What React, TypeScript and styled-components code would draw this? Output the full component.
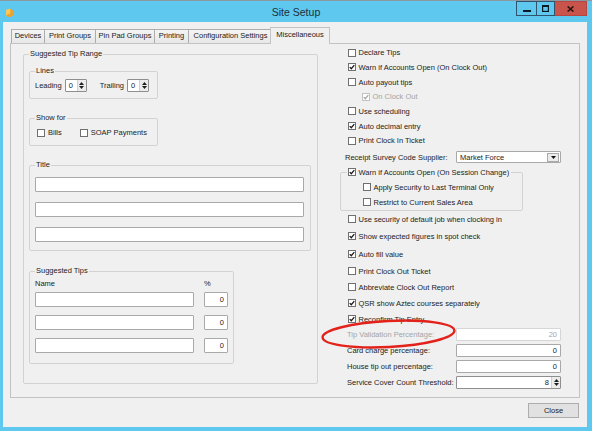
import React from 'react';
import styled, { createGlobalStyle } from 'styled-components';

const GlobalStyle = createGlobalStyle`
  html, body {
    margin: 0;
    padding: 0;
  }
  body {
    width: 592px;
    height: 431px;
    overflow: hidden;
    background: #5ec8ef;
    font-family: "Liberation Sans", Arial, sans-serif;
    color: #1c1c1c;
  }
`;

const Window = styled.div`
  position: relative;
  width: 592px;
  height: 431px;
  box-sizing: border-box;
  background: #5ec8ef;
  border-top: 1px solid #8b98a1;
  display: flex;
  flex-direction: column;
`;

const TitleBar = styled.div`
  display: grid;
  grid-template-columns: 1fr auto 1fr;
  height: 21px;
  flex-shrink: 0;
`;

const AppIcon = styled.div`
  display: flex;
  align-items: flex-start;
  padding: 7px 0 0 5px;
  & svg {
    display: block;
  }
`;

const Title = styled.div`
  margin-top: 1px;
  font-size: 10.5px;
  line-height: 21px;
  color: #1d2f3b;
`;

const Controls = styled.div`
  justify-self: end;
  display: flex;
  margin-right: 5px;
  height: 15px;
`;

const CaptionButton = styled.div<{ $w: number; $close?: boolean }>`
  width: ${p => p.$w}px;
  height: 15px;
  box-sizing: border-box;
  display: flex;
  align-items: center;
  justify-content: center;
  background: ${p => (p.$close ? '#c9544c' : '#5ec8ef')};
  border: 1px solid ${p => (p.$close ? '#b6463f' : '#2f536f')};
  & + & {
    border-left: none;
  }
`;

const Client = styled.div`
  flex: 1;
  margin: 0 5px 4px 3px;
  background: #f0f0f0;
  padding-top: 5px;
  display: flex;
  flex-direction: column;
`;

const TabStrip = styled.div`
  display: flex;
  align-items: flex-end;
  height: 16px;
  padding-left: 8px;
  position: relative;
  z-index: 1;
`;

const Tab = styled.div<{ $w: number; $active?: boolean }>`
  width: ${p => p.$w}px;
  height: ${p => (p.$active ? 17 : 14)}px;
  box-sizing: border-box;
  margin-right: -1px;
  margin-left: ${p => (p.$active ? -2 : 0)}px;
  margin-bottom: ${p => (p.$active ? -1 : 0)}px;
  border: 1px solid ${p => (p.$active ? '#c3c3c3' : '#acacac')};
  border-bottom: none;
  background: ${p => (p.$active ? '#f0f0f0' : 'linear-gradient(#f4f4f4, #e7e7e7)')};
  font-size: 7.5px;
  line-height: ${p => (p.$active ? 14 : 12)}px;
  text-align: center;
  white-space: nowrap;
  position: relative;
  z-index: ${p => (p.$active ? 2 : 1)};
`;

const Panel = styled.div`
  margin-left: 7px;
  width: 570px;
  height: 355px;
  box-sizing: border-box;
  border: 1px solid #c3c3c3;
  background: #f0f0f0;
  padding-left: 12px;
  display: grid;
  grid-template-columns: 295px 225px;
  column-gap: 22px;
  align-items: start;
`;

const Footer = styled.div`
  display: flex;
  justify-content: flex-end;
  padding: 5px 8px 0 0;
`;

const Button = styled.div`
  width: 51px;
  height: 15px;
  box-sizing: border-box;
  border: 1px solid #adadad;
  background: #e1e1e1;
  font-size: 7.5px;
  line-height: 13px;
  text-align: center;
`;

const Group = styled.fieldset<{ $w: number; $pad: string }>`
  margin: 0;
  width: ${p => p.$w}px;
  box-sizing: border-box;
  border: 1px solid #d2d2d2;
  border-radius: 2px;
  padding: ${p => p.$pad};
  min-inline-size: 0;
`;

const Legend = styled.legend`
  padding: 0 1px;
  font-size: 7.5px;
  line-height: 10px;
  white-space: nowrap;
`;

const CheckLegend = styled.legend`
  padding: 0 2px 0 1px;
  height: 12px;
  display: flex;
  align-items: center;
  gap: 2.5px;
`;

const Stack = styled.div<{ $gap: number }>`
  display: flex;
  flex-direction: column;
  gap: ${p => p.$gap}px;
`;

const Line = styled.div<{ $h: number; $pl?: number }>`
  display: flex;
  align-items: center;
  height: ${p => p.$h}px;
  padding-left: ${p => p.$pl ?? 0}px;
`;

const Text = styled.span<{ $muted?: boolean; $mr?: number; $w?: number }>`
  font-size: 7.5px;
  white-space: nowrap;
  color: ${p => (p.$muted ? '#a4a4a4' : '#1c1c1c')};
  margin-right: ${p => p.$mr ?? 0}px;
  ${p => (p.$w ? `width: ${p.$w}px; flex-shrink: 0;` : '')}
`;

const Field = styled.div<{ $w: number; $h: number; $right?: boolean; $muted?: boolean }>`
  width: ${p => p.$w}px;
  height: ${p => p.$h}px;
  box-sizing: border-box;
  flex-shrink: 0;
  display: flex;
  align-items: center;
  justify-content: ${p => (p.$right ? 'flex-end' : 'flex-start')};
  padding: 0 ${p => (p.$right ? 3 : 0)}px 0 3px;
  border: 1px solid ${p => (p.$muted ? '#d6d6d6' : '#a9a9a9')};
  border-radius: 1px;
  background: #fff;
  font-size: 7.5px;
  color: ${p => (p.$muted ? '#a4a4a4' : '#1c1c1c')};
`;

const SpinField = styled(Field)`
  padding-right: 0;
  border-color: #8f8f8f;
`;

const SpinArrows = styled.div<{ $tight?: boolean }>`
  margin-left: ${p => (p.$tight ? '0' : 'auto')};
  width: 8px;
  height: 100%;
  display: flex;
  flex-direction: column;
  align-items: center;
  justify-content: center;
  gap: 1px;
  background: #ececec;
  border-left: 1px solid #cfcfcf;
`;

const SpinValue = styled.span`
  margin-right: 2px;
`;

const DropButton = styled.div`
  margin-left: auto;
  width: 12px;
  height: 9px;
  margin-right: 1px;
  box-sizing: border-box;
  border: 1px solid #a9a9a9;
  background: #ececec;
  display: flex;
  align-items: center;
  justify-content: center;
`;

const BoxMark = styled.span<{ $disabled?: boolean }>`
  width: 8px;
  height: 8px;
  box-sizing: border-box;
  flex-shrink: 0;
  display: inline-flex;
  align-items: center;
  justify-content: center;
  border: 1px solid ${p => (p.$disabled ? '#c2c2c2' : '#707070')};
  background: #fff;
`;

const CheckRow = styled.div<{ $h: number; $pl: number }>`
  display: flex;
  align-items: center;
  gap: 2.5px;
  height: ${p => p.$h}px;
  padding-left: ${p => p.$pl}px;
`;

const LeftCol = styled.div`
  margin-top: 5px;
`;

const RightCol = styled.div`
  padding-top: 1.5px;
  display: flex;
  flex-direction: column;
`;

const TipHeader = styled.div`
  display: flex;
  gap: 10px;
  height: 12px;
  align-items: center;
  margin-bottom: 3px;
`;

const TipRow = styled.div`
  display: flex;
  gap: 10px;
`;

const Annotation = styled.svg`
  position: absolute;
  left: 318px;
  top: 316px;
  overflow: visible;
  pointer-events: none;
`;

const Arrow = ({ up }: { up?: boolean }) => (
  <svg width="5" height="3" viewBox="0 0 5 3">
    <path d={up ? 'M0 3 L2.5 0 L5 3 Z' : 'M0 0 L5 0 L2.5 3 Z'} fill="#1f1f1f" />
  </svg>
);

const CheckBox = ({ checked, disabled }: { checked?: boolean; disabled?: boolean }) => (
  <BoxMark $disabled={disabled}>
    {checked && (
      <svg width="6" height="6" viewBox="0 0 6 6">
        <path d="M0.7 3.1 L2.3 4.7 L5.3 1.1" fill="none" stroke={disabled ? '#a8a8a8' : '#1a1a1a'} strokeWidth="1.3" />
      </svg>
    )}
  </BoxMark>
);

type CheckProps = { label: string; checked?: boolean; disabled?: boolean; h: number; pl?: number };

const Check = ({ label, checked, disabled, h, pl = 8 }: CheckProps) => (
  <CheckRow $h={h} $pl={pl}>
    <CheckBox checked={checked} disabled={disabled} />
    <Text $muted={disabled}>{label}</Text>
  </CheckRow>
);

const Spin = ({ w, value }: { w: number; value: string }) => (
  <SpinField $w={w} $h={13}>
    <SpinValue>{value}</SpinValue>
    <SpinArrows>
      <Arrow up />
      <Arrow />
    </SpinArrows>
  </SpinField>
);

const tabs = [
  { label: 'Devices', w: 34 },
  { label: 'Print Groups', w: 52 },
  { label: 'Pin Pad Groups', w: 60 },
  { label: 'Printing', w: 35 },
  { label: 'Configuration Settings', w: 85 },
];

const topChecks: { label: string; checked?: boolean; disabled?: boolean; pl?: number }[] = [
  { label: 'Declare Tips' },
  { label: 'Warn if Accounts Open (On Clock Out)', checked: true },
  { label: 'Auto payout tips' },
  { label: 'On Clock Out', checked: true, disabled: true, pl: 22 },
  { label: 'Use scheduling' },
  { label: 'Auto decimal entry', checked: true },
  { label: 'Print Clock In Ticket' },
];

const lowerChecks: { label: string; checked?: boolean; h: number }[] = [
  { label: 'Use security of default job when clocking in', h: 17 },
  { label: 'Show expected figures in spot check', checked: true, h: 17.5 },
  { label: 'Auto fill value', checked: true, h: 18 },
  { label: 'Print Clock Out Ticket', h: 16 },
  { label: 'Abbreviate Clock Out Report', h: 16 },
  { label: 'QSR show Aztec courses separately', checked: true, h: 16 },
  { label: 'Reconfirm Tip Entry', checked: true, h: 16 },
];

const fields: { label: string; value: string; muted?: boolean }[] = [
  { label: 'Tip Validation Percentage:', value: '20', muted: true },
  { label: 'Card charge percentage:', value: '0' },
  { label: 'House tip out percentage:', value: '0' },
];

export default function App() {
  return (
    <>
      <GlobalStyle />
      <Window>
        <TitleBar>
          <AppIcon>
            <svg width="9" height="10" viewBox="0 0 9 10">
              <path d="M1 2 L5 0.5 L8.5 3 L8 7.5 L4.5 9.5 L1 7.5 Z" fill="#f0a12a" />
              <path d="M1 2 L5 0.5 L5.5 5 L1 7.5 Z" fill="#f7c95a" />
            </svg>
          </AppIcon>
          <Title>Site Setup</Title>
          <Controls>
            <CaptionButton $w={21}>
              <svg width="8" height="8" viewBox="0 0 8 8">
                <rect x="0" y="5" width="8" height="2" fill="#0d1b26" />
              </svg>
            </CaptionButton>
            <CaptionButton $w={18}>
              <svg width="7" height="7" viewBox="0 0 7 7">
                <rect x="0.6" y="0.6" width="5.8" height="5.8" fill="none" stroke="#0d1b26" strokeWidth="1.2" />
                <rect x="0" y="0" width="7" height="2" fill="#0d1b26" />
              </svg>
            </CaptionButton>
            <CaptionButton $w={32} $close>
              <svg width="7" height="6" viewBox="0 0 7 6">
                <path d="M0.6 0.4 L6.4 5.6 M6.4 0.4 L0.6 5.6" stroke="#2a1412" strokeWidth="1.5" />
              </svg>
            </CaptionButton>
          </Controls>
        </TitleBar>

        <Client>
          <TabStrip>
            {tabs.map(t => (
              <Tab key={t.label} $w={t.w}>
                {t.label}
              </Tab>
            ))}
            <Tab $w={60} $active>
              Miscellaneous
            </Tab>
          </TabStrip>

          <Panel>
            <LeftCol>
              <Group $w={295} $pad="7px 6px 19px 5px">
                <Legend>Suggested Tip Range</Legend>
                <Stack $gap={14}>
                  <Group $w={129} $pad="2px 5px 5px 5px">
                    <Legend>Lines</Legend>
                    <Line $h={15}>
                      <Text $mr={3}>Leading</Text>
                      <Spin w={22} value="0" />
                      <Text style={{ marginLeft: 13 }} $mr={3}>
                        Trailing
                      </Text>
                      <Spin w={22} value="0" />
                    </Line>
                  </Group>

                  <Group $w={129} $pad="2px 5px 5px 5px">
                    <Legend>Show for</Legend>
                    <Line $h={15} $pl={2}>
                      <CheckBox />
                      <Text style={{ marginLeft: 3 }} $mr={18}>
                        Bills
                      </Text>
                      <CheckBox />
                      <Text style={{ marginLeft: 3 }}>SOAP Payments</Text>
                    </Line>
                  </Group>

                  <Group $w={282} $pad="7px 6px 8px 5px">
                    <Legend>Title</Legend>
                    <Stack $gap={10}>
                      <Field $w={269} $h={15} />
                      <Field $w={269} $h={15} />
                      <Field $w={269} $h={15} />
                    </Stack>
                  </Group>

                  <Group $w={205} $pad="1px 5px 10px 5px" style={{ marginTop: 1 }}>
                    <Legend>Suggested Tips</Legend>
                    <TipHeader>
                      <Text $w={159}>Name</Text>
                      <Text>%</Text>
                    </TipHeader>
                    <Stack $gap={8}>
                      {[0, 1, 2].map(i => (
                        <TipRow key={i}>
                          <Field $w={159} $h={15} />
                          <Field $w={24} $h={15} $right>
                            0
                          </Field>
                        </TipRow>
                      ))}
                    </Stack>
                  </Group>
                </Stack>
              </Group>
            </LeftCol>

            <RightCol>
              {topChecks.map(c => (
                <Check key={c.label} h={14.67} {...c} />
              ))}

              <Line $h={18} $pl={5}>
                <Text $w={111}>Receipt Survey Code Supplier:</Text>
                <Field $w={105} $h={12}>
                  Market Force
                  <DropButton>
                    <svg width="5" height="3" viewBox="0 0 5 3">
                      <path d="M0 0 L5 0 L2.5 3 Z" fill="#111" />
                    </svg>
                  </DropButton>
                </Field>
              </Line>

              <Group $w={183} $pad="1.5px 0 0 6px">
                <CheckLegend>
                  <CheckBox checked />
                  <Text>Warn if Accounts Open (On Session Change)</Text>
                </CheckLegend>
                <Check label="Apply Security to Last Terminal Only" h={15} pl={16} />
                <Check label="Restrict to Current Sales Area" h={15} pl={16} />
              </Group>

              {lowerChecks.map(c => (
                <Check key={c.label} label={c.label} checked={c.checked} h={c.h} />
              ))}

              {fields.map(f => (
                <Line key={f.label} $h={15.7} $pl={7}>
                  <Text $w={109} $muted={f.muted}>
                    {f.label}
                  </Text>
                  <Field $w={105} $h={13} $right $muted={f.muted}>
                    {f.value}
                  </Field>
                </Line>
              ))}
              <Line $h={15.7} $pl={7}>
                <Text $w={109}>Service Cover Count Threshold:</Text>
                <SpinField $w={105} $h={13} $right>
                  <SpinValue>8</SpinValue>
                  <SpinArrows $tight>
                    <Arrow up />
                    <Arrow />
                  </SpinArrows>
                </SpinField>
              </Line>
            </RightCol>
          </Panel>

          <Footer>
            <Button>Close</Button>
          </Footer>
        </Client>

        <Annotation width="142" height="36" viewBox="0 0 142 36">
          <ellipse
            cx="70.5"
            cy="17"
            rx="66"
            ry="13"
            fill="none"
            stroke="#e3221b"
            strokeWidth="2.4"
            transform="rotate(-3 70.5 17)"
          />
        </Annotation>
      </Window>
    </>
  );
}
